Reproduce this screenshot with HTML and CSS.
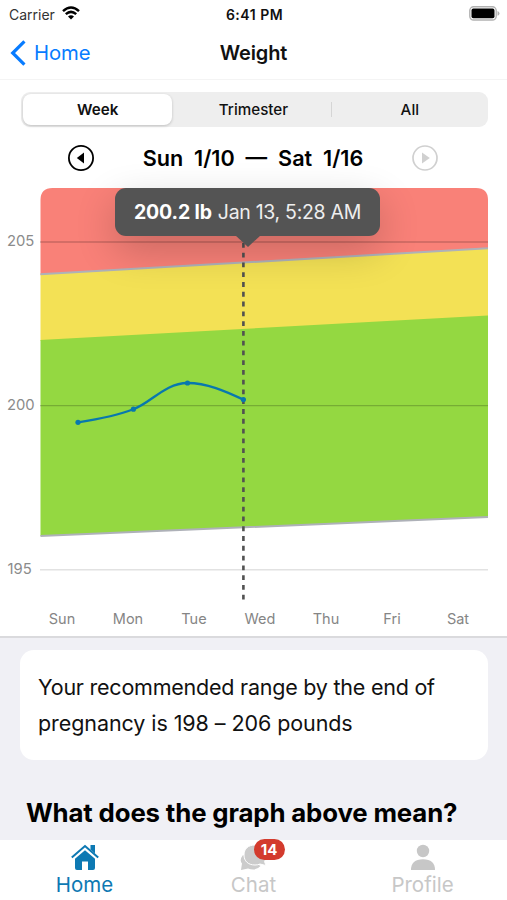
FILE: index.html
```html
<!DOCTYPE html>
<html lang="en">
<head>
<meta charset="utf-8">
<title>Weight</title>
<link rel="stylesheet" href="styles.css">
</head>
<body>
<div class="screen">
  <header class="status">
    <div class="carrier"><span>Carrier</span>
      <svg width="18" height="14" viewBox="0 0 18 14" fill="none" stroke="#000" stroke-width="2.5"><path d="M1 5.1Q9-2 17 5.1M3.800 8.100Q9 3.600 14.200 8.100"/><path d="M6 10.500Q9 8 12 10.500L9 13.600Z" fill="#000" stroke="none"/></svg>
    </div>
    <div class="clock">6:41 PM</div>
    <svg class="battery" width="31" height="15" viewBox="0 0 31 15"><rect x=".8" y=".8" width="26.4" height="13.2" rx="3.8" fill="#fff" stroke="#b1b1b1" stroke-width="1.4"/><rect x="2.5" y="2.6" width="23" height="9.7" rx="1.8"/><path d="M28.500 5Q30.500 5.600 30.500 7.400T28.500 9.800Z" fill="#b1b1b1"/></svg>
  </header>
  <nav class="nav">
    <a class="back"><svg width="16" height="26" viewBox="0 0 16 26" fill="none" stroke="#087cff" stroke-width="3.2"><path d="M14.400 1.300 2.700 13 14.400 24.700"/></svg><span>Home</span></a>
    <h1>Weight</h1>
  </nav>
  <main>
    <div class="segments">
      <div class="segment selected"><span>Week</span></div>
      <div class="segment"><span>Trimester</span></div>
      <div class="segment divided"><span>All</span></div>
    </div>
    <div class="range">
      <svg width="28" height="28" viewBox="0 0 28 28"><circle cx="14" cy="14" r="12.1" fill="none" stroke="#000" stroke-width="1.8"/><path d="M17 8.400V19.400L9.800 14Z"/></svg>
      <div class="dates">Sun&nbsp; 1/10&nbsp; —&nbsp; Sat&nbsp; 1/16</div>
      <svg width="28" height="28" viewBox="0 0 28 28"><circle cx="14" cy="14" r="12" fill="none" stroke="#d0d0d0" stroke-width="1.7"/><path d="M11 8.400V19.400L18.800 14Z" fill="#d0d0d0"/></svg>
    </div>
    <section class="chart">
      <svg class="plot" width="507" height="420" viewBox="0 180 507 420">
        <clipPath id="area"><path d="M40.500 200Q40.500 188 52.500 188H476Q488 188 488 200V540H40.500Z"/></clipPath>
        <g clip-path="url(#area)">
          <path fill="#f98178" d="M40 188H488V249L40 275Z"/>
          <path fill="#f3e155" d="M40 274.500 488 248.500V317L40 341Z"/>
          <path fill="#94d841" d="M40 340 488 315.600V517L40 536Z"/>
          <path class="limit" d="M40 274.300 488 248.300M40 536 488 517"/>
        </g>
        <path class="gridline" d="M40 242H488M40 405.700H488"/>
        <path d="M40 569.800H488" stroke="#e2e2e2" stroke-width="1.5"/>
        <g class="ylabels"><text x="7" y="246">205</text><text x="7" y="410">200</text><text x="7.500" y="574">195</text></g>
        <path class="cursor" d="M243.400 243V600"/>
        <path class="weights" d="M78 422.300C96 419.500 115 416.500 133.400 409.200C151 403 165 383 187.500 383C207 383 225 391 243.400 399.600"/>
        <g fill="#0878ae"><circle cx="78" cy="422.300" r="2.600"/><circle cx="133.400" cy="409.200" r="2.600"/><circle cx="187.500" cy="383" r="2.600"/><circle cx="243.400" cy="399.600" r="2.600"/></g>
      </svg>
      <div class="tooltip"><b>200.2 lb</b><span>Jan 13, 5:28 AM</span></div>
      <div class="days"><span>Sun</span><span>Mon</span><span>Tue</span><span>Wed</span><span>Thu</span><span>Fri</span><span>Sat</span></div>
    </section>
    <section class="details">
      <p class="card"><span class="line1">Your recommended range by the end of</span><br><span class="line2">pregnancy is 198 – 206 pounds</span></p>
      <h2>What does the graph above mean?</h2>
    </section>
  </main>
  <footer class="tabs">
    <div class="tab active"><svg width="30" height="28" viewBox="0 0 30 28"><path d="M5 15.800 15 7.200 25 15.800V25Q25 27 23 27H18V18.500H12V27H7Q5 27 5 25Z" fill="#0d79b3"/><path d="M1.800 14.600 15 3 28.200 14.600" fill="none" stroke="#0d79b3" stroke-width="2"/><path d="M20.500 2H25V10.500L20.500 6.500Z" fill="#0d79b3"/></svg><span>Home</span></div>
    <div class="tab"><div class="chat-icon"><svg width="30" height="28" viewBox="0 0 30 28"><path d="M4 12Q0 17 3 20.500L2 27 9 25.500Q17 28.500 21.500 23Z" fill="#ccc"/><path d="M16 2C9 2 5 6 5 12S9 22 16 22Q19 22 21 21L27 22.500 25.500 18.500Q28 15 28 11C28 5 23 2 16 2Z" fill="#ccc" stroke="#fff"/></svg><b class="badge">14</b></div><span>Chat</span></div>
    <div class="tab"><svg width="30" height="28" viewBox="0 0 30 28" fill="#c7c7c7"><circle cx="15" cy="8" r="6.200"/><path d="M3 27Q3 16.200 15 16.200T27 27Z"/></svg><span>Profile</span></div>
  </footer>
</div>
</body>
</html>
```
FILE: styles.css
```css
* { box-sizing: border-box; }
body { margin: 0; font-family: Inter, "Liberation Sans", sans-serif; color: #111; background: #fff; }
svg { display: block; flex: none; }
h1, h2, p { margin: 0; }
.screen { width: 507px; height: 900px; display: flex; flex-direction: column; overflow: hidden; }
.status { height: 28px; display: grid; grid-template-columns: 1fr auto 1fr; align-items: center; padding: 0 7px 0 9px; font-size: 14px; }
.carrier { display: flex; align-items: center; gap: 6px; color: #333; }
.carrier span { width: 47px; }
.carrier svg { margin-top: -3px; }
.clock { font-weight: 600; letter-spacing: .5px; }
.battery { justify-self: end; margin-top: -1px; }
.nav { height: 52px; display: grid; grid-template-columns: 1fr auto 1fr; align-items: center; padding: 0 10px 2px; border-bottom: 1px solid #f4f4f4; }
.back { display: flex; align-items: center; gap: 8px; color: #087cff; font-size: 20.3px; letter-spacing: -.1px; }
h1 { font-size: 20px; font-weight: 600; letter-spacing: -.15px; }
.segments { display: grid; grid-template-columns: repeat(3, 1fr); height: 35px; margin: 12px 19px 0 21px; padding: 2px; background: #eee; border-radius: 9px; }
.segment { display: flex; align-items: center; justify-content: center; font-size: 15.2px; font-weight: 500; position: relative; left: -1px; }
.selected { left: 0; background: #fff; border-radius: 8px; box-shadow: 0 1px 3px #0003; margin-right: 5px; font-weight: 600; }
.divided { left: 0; padding-left: 2px; }
.divided::before { content: ""; position: absolute; left: -1px; top: 8px; height: 15px; width: 1px; background: #d5d5d5; }
.range { height: 61px; display: flex; align-items: center; justify-content: space-between; padding: 0 68px 0 67px; }
.dates { font-size: 21.6px; font-weight: 600; color: #000; white-space: nowrap; }
.chart { position: relative; height: 458px; margin-top: -8px; border-bottom: 2px solid #dadadd; }
.limit { fill: none; stroke: #aeb1b8; stroke-width: 2; }
.gridline { stroke: #000; stroke-opacity: .2; stroke-width: 1.3; }
.ylabels { font-size: 14.8px; fill: #8b8b8b; }
.cursor { stroke: #515151; stroke-width: 2.6; stroke-dasharray: 4.8 4.97; }
.weights { fill: none; stroke: #0878ae; stroke-width: 2.3; }
.tooltip { position: absolute; left: 115px; top: 8px; width: 265px; height: 48px; border-radius: 11px; background: #545454; color: #eee; display: flex; align-items: center; justify-content: center; gap: 6px; font-size: 19.5px; letter-spacing: -.3px; white-space: nowrap; box-shadow: 0 14px 40px #0003; }
.tooltip b { color: #fff; font-weight: 700; letter-spacing: -.15px; }
.tooltip::after { content: ""; position: absolute; left: 120px; top: 47px; border: 13px solid transparent; border-top: 12px solid #545454; border-bottom: 0; }
.days { display: grid; grid-template-columns: repeat(7, 66px); margin-left: 29px; height: 36px; align-items: center; text-align: center; font-size: 14.5px; color: #858585; }
.details { background: #f0f0f5; height: 202px; padding: 12px 19px 0 20px; }
.card { height: 110px; border-radius: 14px; background: #fff; padding: 19px 18px; font-size: 21.5px; line-height: 36px; white-space: nowrap; }
.line1 { letter-spacing: -.23px; }
.line2 { letter-spacing: -.08px; }
h2 { margin: 36px 0 0 6px; font-size: 25.8px; line-height: 34px; font-weight: 700; color: #000; letter-spacing: -.15px; white-space: nowrap; }
.tabs { height: 60px; display: grid; grid-template-columns: repeat(3, 169px); justify-content: center; background: #fff; position: relative; }
.tab { display: flex; flex-direction: column; align-items: center; padding-top: 3px; color: #c7c7c7; font-size: 20.5px; line-height: 28px; }
.active { color: #0d79b3; }
.chat-icon { position: relative; }
.badge { position: absolute; left: 15px; top: -4px; width: 31px; height: 21px; border-radius: 11px; background: #d33b2d; color: #fff; font-size: 15px; line-height: 21px; text-align: center; }
```
